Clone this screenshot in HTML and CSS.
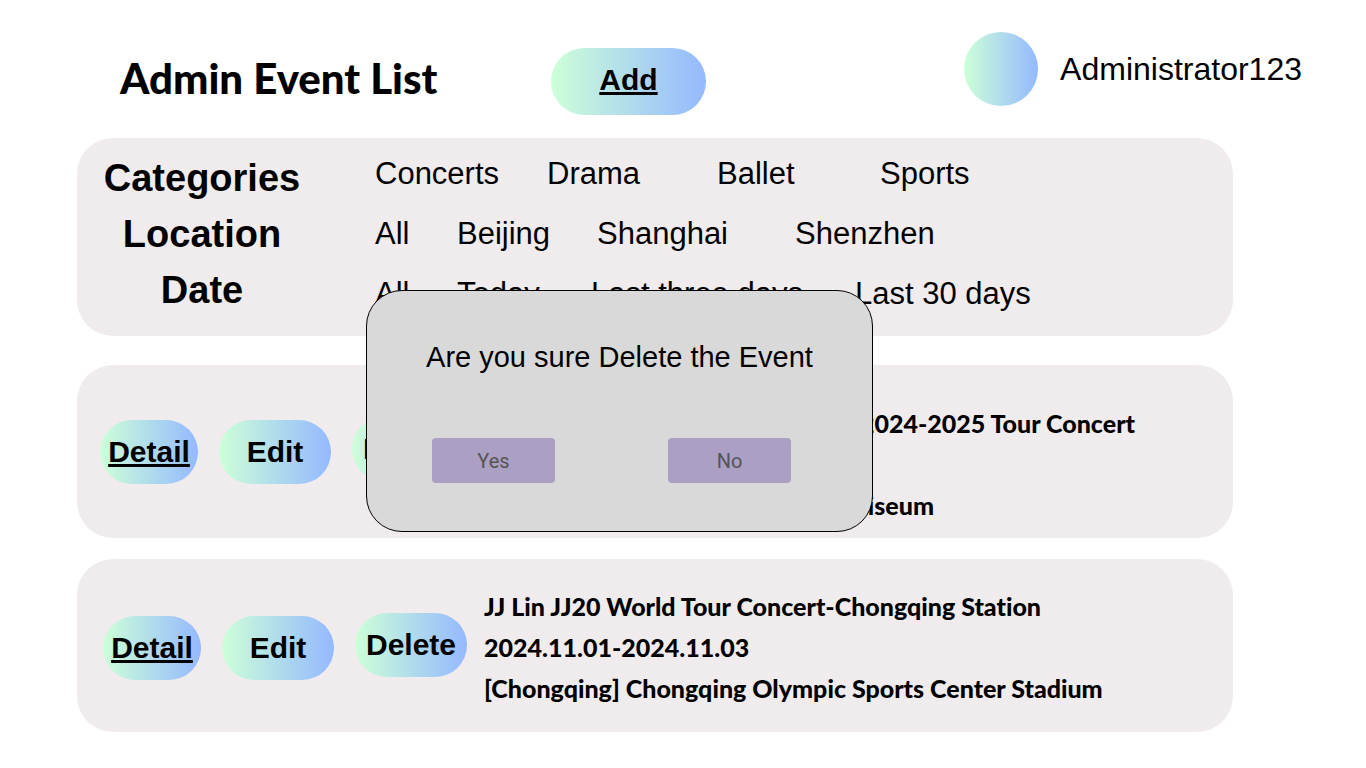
FILE: index.html
```html
<!DOCTYPE html>
<html lang="en">
<head>
<meta charset="utf-8">
<title>Admin Event List</title>
<link rel="stylesheet" href="styles.css">
</head>
<body>
<header class="header">
  <h1 class="title">Admin Event List</h1>
  <a class="pill pill-add" href="#">Add</a>
  <div class="user">
    <span class="avatar"></span>
    <span class="user-name">Administrator123</span>
  </div>
</header>
<main class="main">
  <section class="panel filters">
    <div class="labels">
      <h2 class="label">Categories</h2>
      <h2 class="label">Location</h2>
      <h2 class="label">Date</h2>
    </div>
    <div class="choices">
      <nav class="options options-category" aria-label="Categories">
        <a href="#">Concerts</a><a href="#">Drama</a><a href="#">Ballet</a><a href="#">Sports</a>
      </nav>
      <nav class="options options-location" aria-label="Location">
        <a href="#">All</a><a href="#">Beijing</a><a href="#">Shanghai</a><a href="#">Shenzhen</a>
      </nav>
      <nav class="options options-date" aria-label="Date">
        <a href="#">All</a><a href="#">Today</a><a href="#">Last three days</a><a href="#">Last 30 days</a>
      </nav>
    </div>
  </section>
  <article class="panel event event-first">
    <div class="actions">
      <a class="pill pill-detail" href="#">Detail</a>
      <button class="pill" type="button">Edit</button>
      <button class="pill pill-delete" type="button">Delete</button>
    </div>
    <div class="info">
      <p class="line tour">2024-2025 Tour Concert</p>
      <p class="line venue">Coliseum</p>
    </div>
  </article>
  <article class="panel event event-second">
    <div class="actions">
      <a class="pill pill-detail" href="#">Detail</a>
      <button class="pill" type="button">Edit</button>
      <button class="pill pill-delete" type="button">Delete</button>
    </div>
    <div class="info">
      <p class="line">JJ Lin JJ20 World Tour Concert-Chongqing Station</p>
      <p class="line">2024.11.01-2024.11.03</p>
      <p class="line">[Chongqing] Chongqing Olympic Sports Center Stadium</p>
    </div>
  </article>
</main>
<div class="dialog" role="dialog" aria-labelledby="question">
  <p class="question" id="question">Are you sure Delete the Event</p>
  <div class="answers">
    <button class="answer" type="button">Yes</button>
    <button class="answer" type="button">No</button>
  </div>
</div>
</body>
</html>
```
FILE: styles.css
```css
* { box-sizing: border-box; }

body {
  margin: 0;
  position: relative;
  background: #fff;
  color: #000;
  font-family: "Liberation Sans", Arial, sans-serif;
}

h1, h2, p { margin: 0; }

a { color: inherit; text-decoration: none; }

.header {
  display: flex;
  align-items: flex-start;
  height: 138px;
  padding: 32px 64px 0 120px;
}

.title {
  width: 431px;
  padding-top: 16px;
  font: 900 42px/60px Lato, sans-serif;
  white-space: nowrap;
}

.pill {
  display: flex;
  align-items: center;
  justify-content: center;
  flex: none;
  width: 112px;
  height: 64px;
  padding: 0;
  border: 0;
  border-radius: 32px;
  background: linear-gradient(90deg, #cdffd8, #94b9ff);
  color: #000;
  font: bold 30px/36px "Liberation Sans", Arial, sans-serif;
}

.pill-add {
  width: 155px;
  height: 67px;
  margin-top: 16px;
  padding-bottom: 3px;
  border-radius: 34px;
  text-decoration: underline;
}

.user {
  display: flex;
  align-items: center;
  gap: 22px;
  margin-left: auto;
}

.avatar {
  width: 74px;
  height: 74px;
  border-radius: 50%;
  background: linear-gradient(90deg, #cdffd8, #94b9ff);
}

.user-name { font-size: 32px; line-height: 36px; }

.main { padding: 0 133px 36px 77px; }

.panel {
  display: flex;
  border-radius: 36px;
  background: #f0ecee;
}

.filters {
  min-height: 198px;
  padding-top: 12px;
}

.labels {
  width: 250px;
  text-align: center;
}

.label { font-size: 38px; line-height: 56px; }

.choices { padding-left: 48px; }

.options {
  display: grid;
  font-size: 31px;
  line-height: 48px;
  margin-bottom: 12px;
  white-space: nowrap;
}

.options-category { grid-template-columns: 172px 170px 163px auto; }
.options-location { grid-template-columns: 82px 140px 198px auto; }
.options-date { grid-template-columns: 82px 134px 264px auto; }

.event { min-height: 173px; }

.event-first { margin-top: 29px; padding: 38px 0 0 23px; }

.event-second { margin-top: 21px; padding: 27px 0 0 26px; }

.actions {
  display: flex;
  align-items: center;
  gap: 21px;
  height: 123px;
}

.event-first .actions { height: 97px; }

.pill-detail { width: 98px; text-decoration: underline; }

.pill-delete { margin-bottom: 6px; }

.info { padding-left: 17px; }

.line {
  font: 900 25px/41px Lato, sans-serif;
  font-variant-ligatures: none;
  white-space: nowrap;
}

.tour { width: 654px; text-align: right; }

.venue { width: 453px; margin-top: 41px; text-align: right; }

.dialog {
  position: absolute;
  top: 290px;
  left: 366px;
  width: 507px;
  padding: 48px 48px;
  border: 1px solid #000;
  border-radius: 36px;
  background: #d9d9d9;
}

.question {
  font-size: 29px;
  line-height: 36px;
  text-align: center;
  white-space: nowrap;
}

.answers {
  display: flex;
  justify-content: space-between;
  padding: 63px 33px 0 17px;
}

.answer {
  width: 123px;
  height: 45px;
  padding: 0;
  border: 0;
  border-radius: 4px;
  background: #ab9fc3;
  color: #555;
  font: 20px/24px Roboto, sans-serif;
}
```
